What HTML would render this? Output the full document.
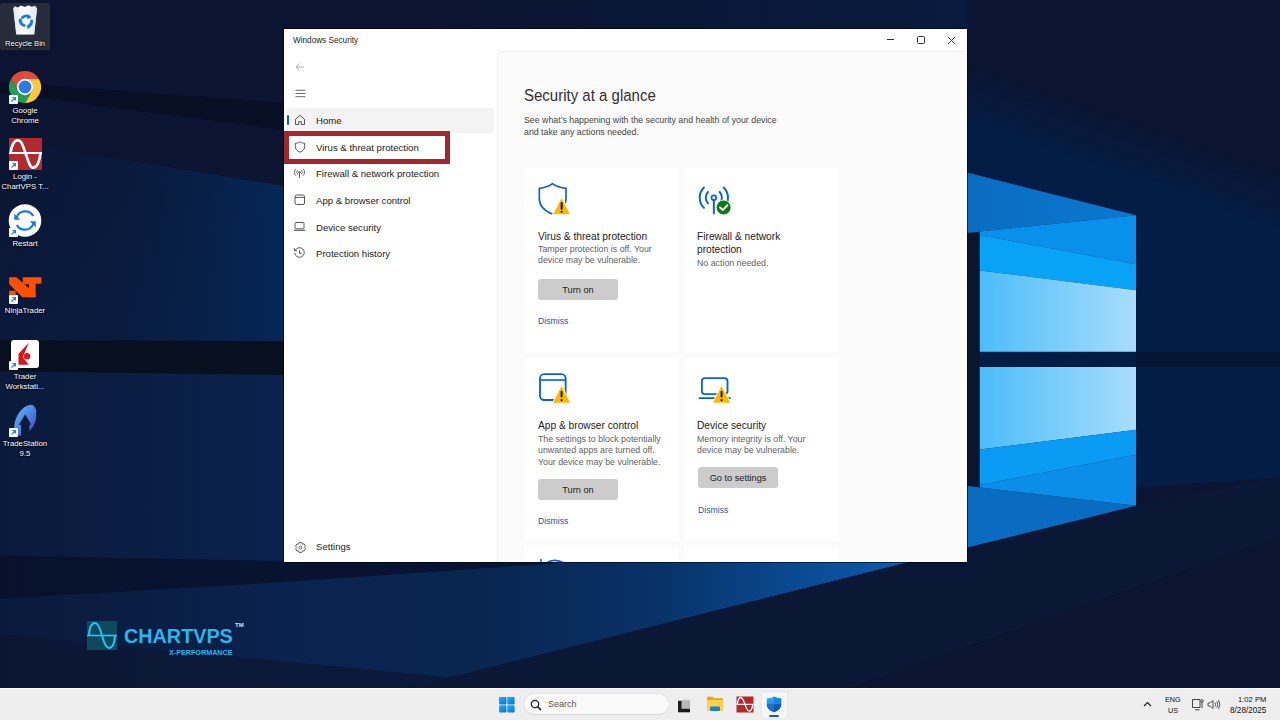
<!DOCTYPE html>
<html><head><meta charset="utf-8">
<style>
*{margin:0;padding:0;box-sizing:border-box}
html,body{width:1280px;height:720px;overflow:hidden;background:#0b1530}
body{position:relative;font-family:"Liberation Sans",sans-serif}
.abs{position:absolute}
.t{position:absolute;white-space:nowrap;line-height:1}
#wall{position:absolute;left:0;top:0}
/* desktop labels */
.dl{position:absolute;color:#fff;font-size:7.8px;text-align:center;width:50px;left:0;line-height:10px;text-shadow:0 0 2px #000,0 1px 1px #000}
.sc{position:absolute;width:9px;height:9px;background:#fff;border-radius:1px}
/* window */
#win{position:absolute;left:284px;top:29px;width:683px;height:533px;background:#fff;box-shadow:0 0 0 1px rgba(0,0,0,.55)}
#content{position:absolute;left:213px;top:22px;width:467px;height:511px;background:#fbfbfb;border-top-left-radius:6px;border-left:1px solid #efefef;border-top:1px solid #efefef;overflow:hidden}
.nav{position:absolute;font-size:9.6px;color:#1b1b1b;white-space:nowrap;line-height:1}
.card{position:absolute;width:155px;height:184px;background:#fff}
.ct{position:absolute;font-size:10.2px;color:#1b1b1b;white-space:nowrap;line-height:1;margin-top:.7px}
.cb{position:absolute;font-size:8.8px;color:#616161;white-space:nowrap;line-height:1}
.btn{position:absolute;width:80px;height:21px;background:#cccccc;border-radius:3px;font-size:9.2px;color:#1b1b1b;text-align:center;padding-top:.7px}
.lnk{position:absolute;font-size:8.7px;color:#1f55a8;white-space:nowrap;line-height:1}
#taskbar{position:absolute;left:0;top:688px;width:1280px;height:32px;background:#eeeeee;border-top:1px solid #f8f8f8}
</style></head><body>

<svg id="wall" width="1280" height="720" viewBox="0 0 1280 720">
  <defs>
    <linearGradient id="light" x1="979" y1="0" x2="1136" y2="0" gradientUnits="userSpaceOnUse">
      <stop offset="0" stop-color="#4cbdfa"/>
      <stop offset="1" stop-color="#a9ddfc"/>
    </linearGradient>
    <linearGradient id="ceilL" x1="0" y1="150" x2="60" y2="343" gradientUnits="userSpaceOnUse">
      <stop offset="0" stop-color="#0b1532"/>
      <stop offset="1" stop-color="#0a1a3c"/>
    </linearGradient>
    <linearGradient id="ceilH" x1="0" y1="0" x2="284" y2="0" gradientUnits="userSpaceOnUse">
      <stop offset="0" stop-color="#06224c" stop-opacity="0"/>
      <stop offset="0.45" stop-color="#06224c" stop-opacity="0.3"/>
      <stop offset="1" stop-color="#05285a" stop-opacity="0.9"/>
    </linearGradient>
    <linearGradient id="topB" x1="400" y1="0" x2="967" y2="0" gradientUnits="userSpaceOnUse">
      <stop offset="0" stop-color="#06204a" stop-opacity="0"/>
      <stop offset="1" stop-color="#06204a" stop-opacity="0.55"/>
    </linearGradient>
    <linearGradient id="floorL" x1="0" y1="0" x2="284" y2="0" gradientUnits="userSpaceOnUse">
      <stop offset="0" stop-color="#0a1b3e"/>
      <stop offset="1" stop-color="#0a2a5c"/>
    </linearGradient>
    <linearGradient id="lowL" x1="0" y1="540" x2="0" y2="688" gradientUnits="userSpaceOnUse">
      <stop offset="0" stop-color="#0a1836"/>
      <stop offset="1" stop-color="#0b1530"/>
    </linearGradient>
    <linearGradient id="beamB" x1="0" y1="0" x2="967" y2="0" gradientUnits="userSpaceOnUse">
      <stop offset="0" stop-color="#0a1a3a"/>
      <stop offset="0.29" stop-color="#0a224e"/>
      <stop offset="0.5" stop-color="#082650"/>
      <stop offset="0.68" stop-color="#083268"/>
      <stop offset="0.85" stop-color="#0a4e98"/>
      <stop offset="1" stop-color="#0a68c0"/>
    </linearGradient>
    <filter id="soft" x="-5%" y="-5%" width="110%" height="110%"><feGaussianBlur stdDeviation="1.2"/></filter>
    <linearGradient id="ceilR" x1="1126.6" y1="113.9" x2="1106.9" y2="170.6" gradientUnits="userSpaceOnUse">
      <stop offset="0" stop-color="#0b1430"/>
      <stop offset="1" stop-color="#041d44"/>
    </linearGradient>
    <linearGradient id="beamTop" x1="967" y1="0" x2="1136" y2="0" gradientUnits="userSpaceOnUse">
      <stop offset="0" stop-color="#0a6cc0"/>
      <stop offset="1" stop-color="#0a78d0"/>
    </linearGradient>
  </defs>
  <rect width="1280" height="720" fill="#0b1430"/>
  <g>
  <!-- LEFT -->
  <polygon points="-20,90 284,130 284,186 -20,136" fill="#0b1532"/>
  <polygon points="-20,136 284,186 284,345 -20,341" fill="url(#ceilL)"/>
  <polygon points="-20,136 284,186 284,345 -20,341" fill="url(#ceilH)"/>
  <polygon points="-20,80 284,103 284,130 -20,90" fill="#080f24"/>
  <polygon points="-20,340 284,341 284,376 -20,372" fill="#08101f"/>
  <!-- floor beam -->
  <polygon points="-20,371 284,375 967,486 967,547.5 284,719 -20,740" fill="url(#beamB)"/>
  <polygon points="-20,555 284,561 560,563 284,582 -20,600" fill="#07102a" opacity="0.85"/>
  <polygon points="-20,632 450,677.5 284,719 -20,740" fill="#0b1530" opacity="0.7"/>
  <rect x="284" y="-5" width="700" height="40" fill="url(#topB)"/>
  <!-- RIGHT -->
  <polygon points="967,-20 1300,-20 1300,192 967,80" fill="#0b1430"/>
  <polygon points="967,30 1300,145 1300,476 967,500" fill="url(#ceilR)"/>
  <polygon points="1300,472 1136,505.8 967,547.5 450,677.5 284,719 700,741 1300,530" fill="#0a1735"/>
  <polygon points="700,741 1300,530 1300,741" fill="#0b1530"/>
  <polygon points="1136,352 1300,352 1300,367 1136,367" fill="#07122a" opacity="0.6"/>
  </g>
  <!-- vertical gap -->
  <rect x="967" y="232.9" width="12.8" height="253" fill="#081630"/>
  <!-- ceiling beam near logo -->
  <polygon points="967,172.5 1136,215.2 967,232.9" fill="url(#beamTop)"/>
  <!-- top pane -->
  <polygon points="979.8,231.6 1136,215.2 1136,264.2 979.8,235" fill="#0890ea"/>
  <polygon points="979.8,235 1136,264.2 1136,290.2 979.8,270.4" fill="#08a2f6"/>
  <polygon points="979.8,270.4 1136,290.2 1136,351.7 979.8,351.7" fill="url(#light)"/>
  <!-- bottom pane -->
  <polygon points="979.8,367 1136,367 1136,429.8 979.8,449.6" fill="url(#light)"/>
  <polygon points="979.8,449.6 1136,429.8 1136,454.8 979.8,485" fill="#0a9cf4"/>
  <polygon points="979.8,485 1136,454.8 1136,505.8 979.8,487.4" fill="#0a8ee8"/>
  <polygon points="967.3,486 1136,505.8 967.3,547.5" fill="#0a6cc0"/>
</svg>

<div id="desk">
  <!-- recycle bin -->
  <div class="abs" style="left:0;top:3px;width:50px;height:47px;background:#262c3a;border-radius:2px"></div>
  <svg class="abs" style="left:0;top:0" width="60" height="60" viewBox="0 0 720 720">
    <defs><linearGradient id="rb" x1="0" y1="0" x2="1" y2="0"><stop offset="0" stop-color="#e6e9ee"/><stop offset="0.5" stop-color="#fafbfc"/><stop offset="1" stop-color="#dfe3e8"/></linearGradient></defs>
    <path d="M160 100L175 75L215 90L250 65L300 85L340 62L380 80L420 70L445 100L410 410H195Z" fill="url(#rb)"/>
    <path d="M160 100H445L410 415H195Z" fill="url(#rb)" opacity="0.9"/>
    <g fill="none" stroke="#1a7ae0" stroke-width="34" stroke-linecap="round">
      <path d="M270 210A70 70 0 0 1 350 200"/>
      <path d="M380 250A70 70 0 0 1 345 315"/>
      <path d="M290 305A70 70 0 0 1 240 240"/>
    </g>
    <path d="M335 175L375 210L325 230Z M360 325L320 300L335 350Z M220 260L255 225L270 270Z" fill="#1a7ae0"/>
  </svg>
  <div class="dl" style="top:39px;font-size:7.6px">Recycle Bin</div>
  <!-- chrome -->
  <svg class="abs" style="left:9.3px;top:71.2px" width="32" height="32" viewBox="0 0 32 32">
    <path d="M16 8H29.86A16 16 0 0 0 2.14 8L9.07 20A8 8 0 0 1 16 8Z" fill="#e04a3a"/>
    <path d="M16 8H29.86A16 16 0 0 1 16 32L22.93 20A8 8 0 0 0 16 8Z" fill="#fcc934"/>
    <path d="M2.14 8L9.07 20A8 8 0 0 0 22.93 20L16 32A16 16 0 0 1 2.14 8Z" fill="#1fa055"/>
    <circle cx="16" cy="16" r="8.2" fill="#fff"/>
    <circle cx="16" cy="16" r="6.4" fill="#2a7ae8"/>
  </svg>
  <div class="sc" style="left:9px;top:95px"></div>
  <svg class="abs" style="left:10px;top:96px" width="7" height="7" viewBox="0 0 7 7"><path d="M1.5 5.5L5.2 1.8M2.5 1.6H5.4V4.5" stroke="#1a8ae6" stroke-width="1.2" fill="none"/></svg>
  <div class="dl" style="top:106px">Google<br>Chrome</div>
  <!-- login chartvps -->
  <div class="abs" style="left:9px;top:138px;width:33px;height:32px;background:#b12a2d"></div>
  <svg class="abs" style="left:9px;top:138px" width="33" height="32" viewBox="0 0 33 32">
    <path d="M0 15H33" stroke="#fff" stroke-width="2.2"/>
    <path d="M1.5 15C3 5 6 2.2 9 2.2C12.5 2.2 14 8 16.5 15C19 22 20.5 29.6 24 29.6C27 29.6 30 27 31.5 15" stroke="#fff" stroke-width="2.6" fill="none"/>
  </svg>
  <div class="sc" style="left:9px;top:161px"></div>
  <svg class="abs" style="left:10px;top:162px" width="7" height="7" viewBox="0 0 7 7"><path d="M1.5 5.5L5.2 1.8M2.5 1.6H5.4V4.5" stroke="#1a8ae6" stroke-width="1.2" fill="none"/></svg>
  <div class="dl" style="top:172px">Login -<br>ChartVPS T...</div>
  <!-- restart -->
  <svg class="abs" style="left:8px;top:204px" width="34" height="34" viewBox="0 0 34 34">
    <circle cx="17" cy="16.5" r="16.3" fill="#fff"/>
    <g fill="none" stroke="#1a7ee0" stroke-width="2.2">
      <path d="M8.5 13.5A9.2 9.2 0 0 1 25.2 12"/>
      <path d="M25.5 19.5A9.2 9.2 0 0 1 8.8 21"/>
    </g>
    <path d="M6.2 9.5V15.8H12.2Z" fill="#1a7ee0"/>
    <path d="M27.8 23.5V17.2H21.8Z" fill="#1a7ee0"/>
  </svg>
  <div class="sc" style="left:9px;top:228px"></div>
  <svg class="abs" style="left:10px;top:229px" width="7" height="7" viewBox="0 0 7 7"><path d="M1.5 5.5L5.2 1.8M2.5 1.6H5.4V4.5" stroke="#1a8ae6" stroke-width="1.2" fill="none"/></svg>
  <div class="dl" style="top:238.5px">Restart</div>
  <!-- ninjatrader -->
  <svg class="abs" style="left:0;top:265px" width="50" height="40" viewBox="0 0 50 40">
    <path d="M9.1 12.3H16.5L35.6 29.2V32.2H22.3L9.1 19.1Z" fill="#ff4f00"/>
    <path d="M22.7 12.3H41.4V18.7H35.6V32.2H29V19.3H22.7Z" fill="#ff4f00"/>
    <path d="M9.1 25.7H15.7V30H9.1Z" fill="#ff4f00"/>
  </svg>
  <div class="sc" style="left:9px;top:295px"></div>
  <svg class="abs" style="left:10px;top:296px" width="7" height="7" viewBox="0 0 7 7"><path d="M1.5 5.5L5.2 1.8M2.5 1.6H5.4V4.5" stroke="#1a8ae6" stroke-width="1.2" fill="none"/></svg>
  <div class="dl" style="top:305.5px">NinjaTrader</div>
  <!-- trader workstation -->
  <div class="abs" style="left:11px;top:340px;width:28px;height:28px;background:#fff;border-radius:3px"></div>
  <svg class="abs" style="left:0;top:330px" width="60" height="65" viewBox="0 0 665 720">
    <path d="M320 140L205 262V385H318L252 300Z" fill="#d8141c"/>
    <circle cx="300" cy="290" r="36" fill="#e3141c"/>
  </svg>
  <div class="sc" style="left:9px;top:361px"></div>
  <svg class="abs" style="left:10px;top:362px" width="7" height="7" viewBox="0 0 7 7"><path d="M1.5 5.5L5.2 1.8M2.5 1.6H5.4V4.5" stroke="#1a8ae6" stroke-width="1.2" fill="none"/></svg>
  <div class="dl" style="top:372px">Trader<br>Workstati...</div>
  <!-- tradestation -->
  <svg class="abs" style="left:8px;top:400px" width="36" height="40" viewBox="0 0 648 720">
    <defs><linearGradient id="ts" x1="0" y1="0" x2="1" y2="1"><stop offset="0" stop-color="#62c0ff"/><stop offset="0.55" stop-color="#4a7ee0"/><stop offset="1" stop-color="#5530b8"/></linearGradient></defs>
    <path d="M110 490C120 300 250 110 400 85C490 75 525 180 505 330C495 420 445 500 385 560L385 450L415 440L310 255L195 445L235 452L235 640L190 640C150 600 110 560 110 490Z" fill="url(#ts)"/>
  </svg>
  <div class="sc" style="left:9px;top:428px"></div>
  <svg class="abs" style="left:10px;top:429px" width="7" height="7" viewBox="0 0 7 7"><path d="M1.5 5.5L5.2 1.8M2.5 1.6H5.4V4.5" stroke="#1a8ae6" stroke-width="1.2" fill="none"/></svg>
  <div class="dl" style="top:439px">TradeStation<br>9.5</div>
</div>
<div id="logo">
  <div class="abs" style="left:87px;top:621px;width:30px;height:29px;background:#0e4a5e"></div>
  <svg class="abs" style="left:87px;top:621px" width="30" height="29" viewBox="0 0 30 29">
    <path d="M0 14.5H30" stroke="#28c4f5" stroke-width="1.6"/>
    <path d="M2 14.5C2.5 6 5 2 8 2C11 2 13 7 15 14.5C17 22 19 27 22 27C25 27 27.5 23 28 14.5" stroke="#28c4f5" stroke-width="2" fill="none"/>
  </svg>
  <div class="t" style="left:124px;top:627px;font-size:19.8px;font-weight:bold;color:#27b6ee">CHARTVPS</div>
  <div class="t" style="left:235px;top:622px;font-size:6px;font-weight:bold;color:#cfe6f3">TM</div>
  <div class="t" style="left:169px;top:648.5px;font-size:7.2px;font-weight:bold;color:#27b6ee">X-PERFORMANCE</div>
</div>

<div id="win">
  <div class="t" style="left:9px;top:7.7px;font-size:8.2px;color:#1b1b1b">Windows Security</div>
  <!-- controls -->
  <div class="abs" style="left:603px;top:10px;width:7px;height:1px;background:#333"></div>
  <div class="abs" style="left:633px;top:7px;width:7.5px;height:7.5px;border:1px solid #333;border-radius:1.5px"></div>
  <svg class="abs" style="left:663px;top:7px" width="9" height="9" viewBox="0 0 9 9"><path d="M1 1L8 8M8 1L1 8" stroke="#333" stroke-width="0.9"/></svg>
  <!-- back + hamburger -->
  <svg class="abs" style="left:11px;top:33px" width="10" height="10" viewBox="0 0 10 10"><path d="M1.2 5H9M4.6 1.5L1.2 5L4.6 8.5" stroke="#9a9a9a" stroke-width="0.8" fill="none"/></svg>
  <svg class="abs" style="left:11px;top:60px" width="11" height="9" viewBox="0 0 11 9"><path d="M0.5 1.3H10.5M0.5 4.5H10.5M0.5 7.7H10.5" stroke="#444" stroke-width="0.8"/></svg>
  <!-- home highlight -->
  <div class="abs" style="left:3px;top:79px;width:207px;height:25px;background:#f3f3f3;border-radius:3px"></div>
  <div class="abs" style="left:3px;top:86px;width:2px;height:10px;background:#0a5cc8;border-radius:1px"></div>
  <svg class="abs" style="left:10px;top:85px" width="12" height="12" viewBox="0 0 12 12"><path d="M1.5 5.2L6 1.3L10.5 5.2V10.5H7.3V7.6H4.7V10.5H1.5Z" stroke="#444" stroke-width="0.9" fill="none" stroke-linejoin="round"/></svg>
  <div class="nav" style="left:32px;top:86.5px">Home</div>
  <!-- red box -->
  <div class="abs" style="left:0px;top:102px;width:166px;height:33px;border:5px solid #a3272d;background:#fff"></div>
  <svg class="abs" style="left:10px;top:112px" width="12" height="12" viewBox="0 0 12 12"><path d="M6 0.8C4.3 2 2.8 2.3 1.3 2.3V5.6C1.3 8.4 3.3 10.2 6 11.2C8.7 10.2 10.7 8.4 10.7 5.6V2.3C9.2 2.3 7.7 2 6 0.8Z" stroke="#444" stroke-width="0.9" fill="none"/></svg>
  <div class="nav" style="left:32px;top:113.5px">Virus &amp; threat protection</div>
  <!-- firewall -->
  <svg class="abs" style="left:9px;top:139px" width="13" height="11" viewBox="0 0 13 11"><g stroke="#444" stroke-width="0.8" fill="none"><path d="M6.5 4.3V10"/><circle cx="6.5" cy="4.3" r="0.9"/><path d="M4.6 2.3A2.8 2.8 0 0 0 4.6 6.3M8.4 2.3A2.8 2.8 0 0 1 8.4 6.3"/><path d="M2.9 0.9A4.8 4.8 0 0 0 2.9 7.7M10.1 0.9A4.8 4.8 0 0 1 10.1 7.7"/></g></svg>
  <div class="nav" style="left:32px;top:139.7px">Firewall &amp; network protection</div>
  <!-- app -->
  <svg class="abs" style="left:10px;top:165px" width="12" height="12" viewBox="0 0 12 12"><rect x="1" y="1" width="9.5" height="9.5" rx="1.5" stroke="#444" stroke-width="0.9" fill="none"/><path d="M1 3.4H10.5" stroke="#444" stroke-width="0.9"/></svg>
  <div class="nav" style="left:32px;top:167px">App &amp; browser control</div>
  <!-- device -->
  <svg class="abs" style="left:9px;top:192px" width="13" height="11" viewBox="0 0 13 11"><rect x="2" y="1.5" width="9" height="6.3" rx="1" stroke="#444" stroke-width="0.9" fill="none"/><path d="M0.8 9.3H12.2" stroke="#444" stroke-width="1"/></svg>
  <div class="nav" style="left:32px;top:194px">Device security</div>
  <!-- history -->
  <svg class="abs" style="left:9px;top:218px" width="13" height="12" viewBox="0 0 13 12"><path d="M2.2 3.3A4.8 4.8 0 1 1 1.7 6" stroke="#444" stroke-width="0.9" fill="none"/><path d="M1.4 1.2V3.7H3.9" stroke="#444" stroke-width="0.9" fill="none"/><path d="M6.5 3.4V6.3H8.7" stroke="#444" stroke-width="0.9" fill="none"/></svg>
  <div class="nav" style="left:32px;top:220.3px">Protection history</div>
  <!-- settings -->
  <svg class="abs" style="left:10px;top:511.5px" width="13" height="13" viewBox="0 0 13 13"><g stroke="#444" stroke-width="0.85" fill="none" stroke-linejoin="round"><circle cx="6.5" cy="6.5" r="1.5"/><path d="M5.19 1.57 L7.81 1.57 L8.37 3.08 L8.53 3.17 L10.11 2.90 L11.42 5.17 L10.40 6.41 L10.40 6.59 L11.42 7.83 L10.11 10.10 L8.53 9.83 L8.37 9.92 L7.81 11.43 L5.19 11.43 L4.63 9.92 L4.47 9.83 L2.89 10.10 L1.58 7.83 L2.60 6.59 L2.60 6.41 L1.58 5.17 L2.89 2.90 L4.47 3.17 L4.63 3.08Z"/></g></svg>
  <div class="nav" style="left:32px;top:513px">Settings</div>

  <div id="content">
    <div class="t" style="left:26px;top:35.6px;font-size:15px;color:#303030;transform:scaleY(1.05);transform-origin:0 100%">Security at a glance</div>
    <div class="cb" style="left:26px;top:61.5px;color:#444;line-height:12px">See what&#8217;s happening with the security and health of your device<br>and take any actions needed.</div>
    <!-- cards (content origin = 498,52 in page) -->
    <div class="card" style="left:26px;top:116px"></div>
    <div class="card" style="left:186px;top:116px"></div>
    <div class="card" style="left:26px;top:305px"></div>
    <div class="card" style="left:186px;top:305px"></div>
    <div class="card" style="left:26px;top:494px;height:20px"></div>
    <div class="card" style="left:186px;top:494px;height:20px"></div>
    <!-- card1 -->
    <svg class="abs" style="left:17px;top:108px" width="60" height="60" viewBox="0 0 720 720">
      <path d="M450 283C400 320 350 335 292 340V465C292 545 350 610 450 648C550 610 612 545 612 465V340C552 335 500 320 450 283Z" fill="none" stroke="#0a64d0" stroke-width="20" stroke-linejoin="round"/>
      <path d="M560 440L670 658H450Z" fill="#fbb900" stroke="#fff" stroke-width="14" stroke-linejoin="round"/>
      <path d="M560 515V585" stroke="#111" stroke-width="24" stroke-linecap="round"/><circle cx="560" cy="622" r="13" fill="#111"/>
    </svg>
    <div class="ct" style="left:40px;top:179px">Virus &amp; threat protection</div>
    <div class="cb" style="margin-top:.7px;left:40px;top:191px;line-height:11.7px">Tamper protection is off. Your<br>device may be vulnerable.</div>
    <div class="btn" style="left:40px;top:227px;line-height:21px">Turn on</div>
    <div class="lnk" style="left:40px;top:265px">Dismiss</div>
    <!-- card2 -->
    <svg class="abs" style="left:192px;top:124px" width="50" height="44" viewBox="0 0 818 720">
      <g fill="none" stroke="#0a64d0" stroke-width="32" stroke-linecap="round">
        <path d="M390 395V615"/>
        <circle cx="390" cy="355" r="38" stroke-width="28"/>
        <path d="M295 262A134 134 0 0 0 295 448M485 262A134 134 0 0 1 485 448"/>
        <path d="M228 188A237 237 0 0 0 228 522M552 188A237 237 0 0 1 552 522"/>
      </g>
      <circle cx="550" cy="515" r="122" fill="#0e7c12" stroke="#fff" stroke-width="14"/>
      <path d="M492 515L538 555L612 478" stroke="#fff" stroke-width="32" fill="none" stroke-linecap="round" stroke-linejoin="round"/>
    </svg>
    <div class="ct" style="left:199px;top:177.5px;line-height:13.3px">Firewall &amp; network<br>protection</div>
    <div class="cb" style="margin-top:.7px;left:199px;top:206px">No action needed.</div>
    <!-- card3 -->
    <svg class="abs" style="left:32px;top:313px" width="50" height="45" viewBox="0 0 800 720">
      <rect x="160" y="145" width="410" height="415" rx="68" fill="none" stroke="#0a64d0" stroke-width="30"/>
      <path d="M160 240H570" stroke="#0a64d0" stroke-width="26"/>
      <path d="M505 320L652 612H358Z" fill="#fbb900" stroke="#fff" stroke-width="14" stroke-linejoin="round"/>
      <path d="M505 428V505" stroke="#111" stroke-width="30" stroke-linecap="round"/><circle cx="505" cy="562" r="17" fill="#111"/>
    </svg>
    <div class="ct" style="left:40px;top:368px">App &amp; browser control</div>
    <div class="cb" style="margin-top:.7px;left:40px;top:381px;line-height:11.7px">The settings to block potentially<br>unwanted apps are turned off.<br>Your device may be vulnerable.</div>
    <div class="btn" style="left:40px;top:427px;line-height:21px">Turn on</div>
    <div class="lnk" style="left:40px;top:465px">Dismiss</div>
    <!-- card4 -->
    <svg class="abs" style="left:192px;top:313px" width="50" height="45" viewBox="0 0 800 720">
      <rect x="190" y="210" width="410" height="255" rx="50" fill="none" stroke="#0a64d0" stroke-width="30"/>
      <path d="M152 530H640" stroke="#0a64d0" stroke-width="28" stroke-linecap="round"/>
      <path d="M505 320L652 612H358Z" fill="#fbb900" stroke="#fff" stroke-width="14" stroke-linejoin="round"/>
      <path d="M505 428V505" stroke="#111" stroke-width="30" stroke-linecap="round"/><circle cx="505" cy="562" r="17" fill="#111"/>
    </svg>
    <div class="ct" style="left:199px;top:368px">Device security</div>
    <div class="cb" style="margin-top:.7px;left:199px;top:381px;line-height:11.7px">Memory integrity is off. Your<br>device may be vulnerable.</div>
    <div class="btn" style="left:200px;top:415px;line-height:21px">Go to settings</div>
    <div class="lnk" style="left:200px;top:453.5px">Dismiss</div>
    <!-- row3 partial icon -->
    <svg class="abs" style="left:40px;top:506px" width="34" height="8" viewBox="0 0 34 8">
      <path d="M3 8V1" stroke="#0a64d0" stroke-width="1.6"/>
      <path d="M8.5 5C12 2.5 18 1.2 25 4.5" stroke="#0a64d0" stroke-width="1.8" fill="none"/>
    </svg>
  </div>
</div>

<div id="taskbar">
  <!-- start -->
  <svg class="abs" style="left:499px;top:8px" width="16" height="16" viewBox="0 0 16 16">
    <defs><linearGradient id="wl" x1="0" y1="0" x2="1" y2="1"><stop offset="0" stop-color="#1fb6f5"/><stop offset="1" stop-color="#0a6fd8"/></linearGradient></defs>
    <rect x="0" y="0" width="7.4" height="7.4" rx="0.8" fill="url(#wl)"/>
    <rect x="8.2" y="0" width="7.4" height="7.4" rx="0.8" fill="url(#wl)"/>
    <rect x="0" y="8.2" width="7.4" height="7.4" rx="0.8" fill="url(#wl)"/>
    <rect x="8.2" y="8.2" width="7.4" height="7.4" rx="0.8" fill="url(#wl)"/>
  </svg>
  <!-- search -->
  <div class="abs" style="left:524px;top:5px;width:145px;height:20px;background:#f9f9f9;border-radius:10px;box-shadow:0 0 0 0.6px #dcdcdc, 0 1px 0 #d6d6d6"></div>
  <svg class="abs" style="left:530px;top:10px" width="12" height="12" viewBox="0 0 12 12"><circle cx="5" cy="5" r="3.7" stroke="#222" stroke-width="1.3" fill="none"/><path d="M7.7 7.7L10.6 10.6" stroke="#222" stroke-width="1.5" stroke-linecap="round"/></svg>
  <div class="t" style="left:548px;top:11px;font-size:9px;color:#555">Search</div>
  <!-- task view -->
  <svg class="abs" style="left:676px;top:7px" width="20" height="18" viewBox="0 0 20 18">
    <rect x="6" y="1" width="11" height="11" fill="#e9e9e9" stroke="#f6f6f6" stroke-width="0.6"/>
    <rect x="2" y="4.8" width="12" height="11.5" fill="#1c1c1c"/>
    <rect x="5.5" y="4.8" width="8.5" height="8" fill="#b8b8b8"/>
  </svg>
  <!-- explorer -->
  <svg class="abs" style="left:706px;top:7px" width="18" height="16" viewBox="0 0 18 16">
    <path d="M1 1.5Q1 0.8 1.7 0.8H6.5L8 2.3H16.3Q17 2.3 17 3V14.3Q17 15 16.3 15H1.7Q1 15 1 14.3Z" fill="#e8a317"/>
    <path d="M1 4H17V14.3Q17 15 16.3 15H1.7Q1 15 1 14.3Z" fill="#fdd14c"/>
    <rect x="4" y="10.5" width="10" height="4.5" rx="1" fill="#1a7fd8"/>
  </svg>
  <!-- chartvps red -->
  <svg class="abs" style="left:736px;top:7px" width="18" height="17" viewBox="0 0 18 17">
    <rect x="0.5" y="0.5" width="17" height="16" fill="#b12a2d"/>
    <path d="M0.5 8.3H17.5" stroke="#fff" stroke-width="1.1"/>
    <path d="M1.2 8.3C2 3 3.3 1.5 4.8 1.5C6.6 1.5 7.6 4.5 9 8.3C10.4 12 11.4 15.2 13.2 15.2C14.8 15.2 16 13.5 16.8 8.3" stroke="#fff" stroke-width="1.3" fill="none"/>
  </svg>
  <!-- security (active) -->
  <div class="abs" style="left:762px;top:3px;width:25px;height:26px;background:#f6f6f6;border-radius:3px;box-shadow:0 0 0 0.5px #e4e4e4"></div>
  <svg class="abs" style="left:766px;top:7px" width="16" height="17" viewBox="0 0 16 17">
    <defs><linearGradient id="sh1" x1="0" y1="0" x2="0" y2="1"><stop offset="0" stop-color="#3aa7f0"/><stop offset="1" stop-color="#1a78d8"/></linearGradient></defs>
    <path d="M8 0.5C6 1.8 3.5 2.5 0.8 2.5V8C0.8 12 3.5 14.5 8 16.2C12.5 14.5 15.2 12 15.2 8V2.5C12.5 2.5 10 1.8 8 0.5Z" fill="url(#sh1)"/>
    <path d="M8 0.5V8.3H15.2V2.5C12.5 2.5 10 1.8 8 0.5Z" fill="#1e84de"/>
    <path d="M0.8 8.3H8V16.2C3.5 14.5 0.8 12 0.8 8.3Z" fill="#1570cc"/>
    <path d="M8 8.3H15.2C15.2 12 12.5 14.5 8 16.2Z" fill="#0e5aa8"/>
  </svg>
  <div class="abs" style="left:769px;top:26px;width:10px;height:2px;background:#0a5cc8;border-radius:1px"></div>
  <!-- tray -->
  <svg class="abs" style="left:1143px;top:12px" width="9" height="6" viewBox="0 0 9 6"><path d="M1 5L4.5 1.5L8 5" stroke="#222" stroke-width="1.2" fill="none"/></svg>
  <div class="t" style="left:1165px;top:7px;font-size:7.2px;color:#111">ENG</div>
  <div class="t" style="left:1168px;top:17.5px;font-size:7.2px;color:#111">US</div>
  <svg class="abs" style="left:1191px;top:9px" width="14" height="13" viewBox="0 0 14 13">
    <path d="M1.5 1.5H9V9.5H1.5Z" stroke="#333" stroke-width="0.9" fill="none" stroke-linejoin="round"/>
    <path d="M4 11.8H8.5" stroke="#333" stroke-width="0.9"/>
    <path d="M11 1.5V10" stroke="#333" stroke-width="0.9"/>
    <circle cx="11" cy="3" r="1.3" fill="#eee" stroke="#333" stroke-width="0.8"/>
  </svg>
  <svg class="abs" style="left:1207px;top:10px" width="14" height="11" viewBox="0 0 14 11">
    <path d="M1 4H3L6 1.5V9.5L3 7H1Z" stroke="#333" stroke-width="0.8" fill="none" stroke-linejoin="round"/>
    <path d="M8 3.5Q9 5.5 8 7.5M9.8 2.3Q11.5 5.5 9.8 8.7M11.6 1Q14 5.5 11.6 10" stroke="#333" stroke-width="0.8" fill="none"/>
  </svg>
  <div class="t" style="left:1238px;top:7px;font-size:7.6px;color:#111">1:02 PM</div>
  <div class="t" style="left:1230px;top:17.5px;font-size:8.2px;color:#111">8/28/2025</div>
</div>

</body></html>
